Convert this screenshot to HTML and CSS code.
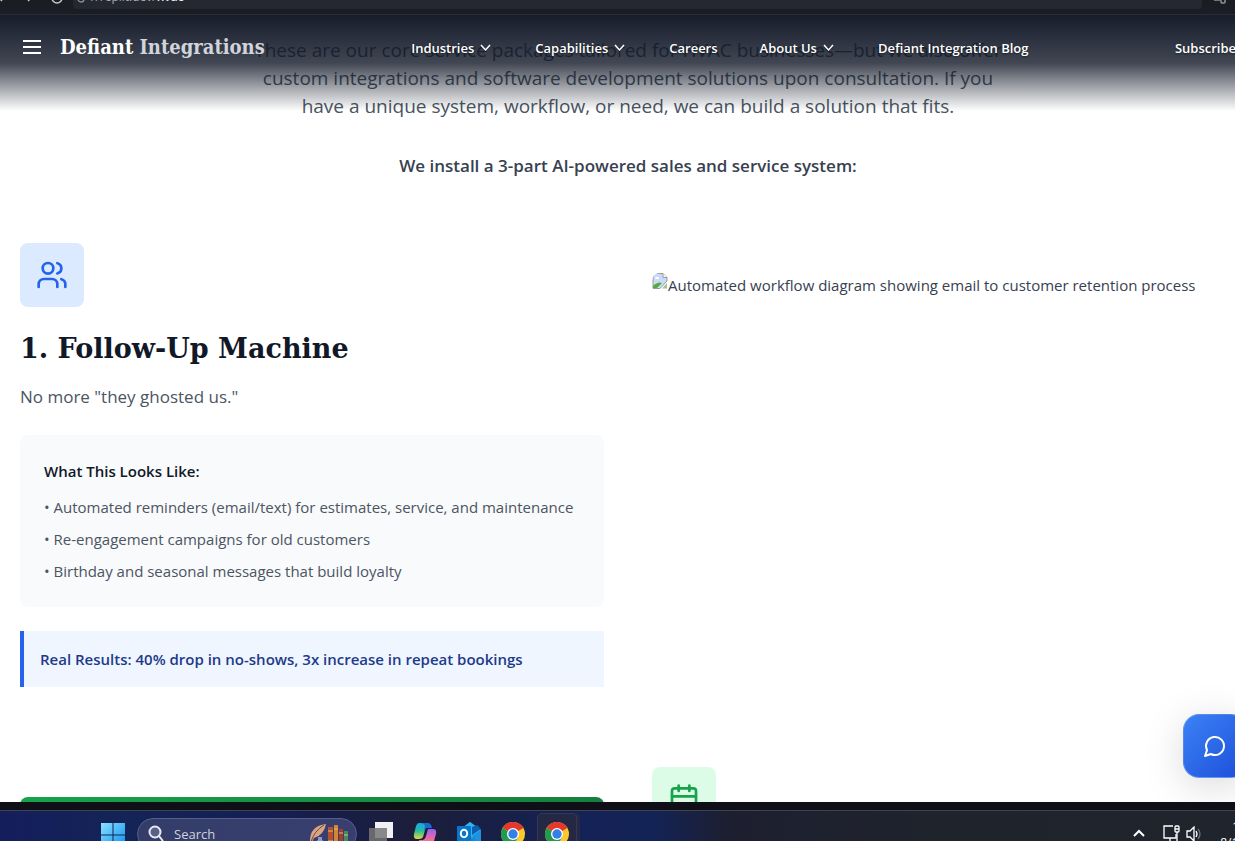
FILE: index.html
```html
<!DOCTYPE html>
<html lang="en">
<head>
<meta charset="utf-8">
<title>Defiant Integrations</title>
<link rel="stylesheet" href="styles.css">
</head>
<body>
<div class="browser-bar">
  <svg class="browser-nav" width="68" height="15" viewBox="0 0 68 15" fill="none" stroke="#c7c9cf" stroke-width="1.5"><path d="M-2 -3l4 4M32 -3l-4 4"/><circle cx="57" cy="-2" r="5"/></svg>
  <div class="address">
    <svg width="10" height="9" viewBox="0 0 10 9" fill="none" stroke="#8f929a" stroke-width="1.3"><circle cx="5" cy="-1" r="3"/></svg>
    <span class="url">//replit.dev/<b>hvac</b></span>
  </div>
  <svg class="browser-tool" width="14" height="9" viewBox="0 0 14 9" fill="none" stroke="#8f929a" stroke-width="1.5"><path d="M0 0h6"/><rect x="7" y="-3" width="4" height="6" rx="1"/></svg>
</div>

<div class="viewport">
  <div class="page">
    <header class="site-header">
      <div class="brand">
        <button class="icon-button" aria-label="Menu"><svg width="24" height="24" viewBox="0 0 24 24" stroke="#fff" stroke-width="2"><path d="M3 6h18M3 12h18M3 18h18"/></svg></button>
        <a class="logo" href="#">Defiant <span>Integrations</span></a>
      </div>
      <nav class="menu">
        <button>Industries <svg class="chev" viewBox="0 0 16 16"><path d="M4 5l4.500 5L13 5"/></svg></button>
        <button>Capabilities <svg class="chev" viewBox="0 0 16 16"><path d="M4 5l4.500 5L13 5"/></svg></button>
        <a href="#">Careers</a>
        <button>About Us <svg class="chev" viewBox="0 0 16 16"><path d="M4 5l4.500 5L13 5"/></svg></button>
        <a href="#">Defiant Integration Blog</a>
      </nav>
      <a class="subscribe" href="#">Subscribe</a>
    </header>

    <main>
      <section class="intro">
        <p class="lead">These are our core service packages tailored for HVAC businesses—but we also offer<br>custom integrations and software development solutions upon consultation. If you<br>have a unique system, workflow, or need, we can build a solution that fits.</p>
        <p class="system">We install a 3-part AI-powered sales and service system:</p>
      </section>

      <section class="services">
        <article class="service">
          <div class="tile tile-blue"><svg width="32" height="32" viewBox="0 0 24 24" fill="none" stroke="#2563eb" stroke-width="2" stroke-linecap="round" stroke-linejoin="round"><path d="M16 21v-2a4 4 0 0 0-4-4H6a4 4 0 0 0-4 4v2"/><circle cx="9" cy="7" r="4"/><path d="M22 21v-2a4 4 0 0 0-3-3.870M16 3.130a4 4 0 0 1 0 7.750"/></svg></div>
          <h2>1. Follow-Up Machine</h2>
          <p class="tagline">No more "they ghosted us."</p>
          <div class="details">
            <h3>What This Looks Like:</h3>
            <ul>
              <li>• Automated reminders (email/text) for estimates, service, and maintenance</li>
              <li>• Re-engagement campaigns for old customers</li>
              <li>• Birthday and seasonal messages that build loyalty</li>
            </ul>
          </div>
          <p class="results">Real Results: 40% drop in no-shows, 3x increase in repeat bookings</p>
        </article>
        <figure class="diagram">
          <svg width="16" height="16" viewBox="0 0 16 16"><path d="M1 3q1-2.500 3-2.500h7l4 4V8L8 15.500H1z" fill="#c9daf8" stroke="#9a9a9a"/><path d="M11 .5v4h4" fill="#fff" stroke="#9a9a9a"/><path d="M3 6q0-2 2-2 2-1 2 2z" fill="#fff"/><path d="M1 15v-2q5-5 9-3l-5 5z" fill="#55aa3c"/><path d="M15 10v5.500h-5z" fill="#9fc597"/></svg>
          <figcaption>Automated workflow diagram showing email to customer retention process</figcaption>
        </figure>
        <div class="green-card"></div>
        <article class="service">
          <div class="tile tile-green"><svg width="32" height="32" viewBox="0 0 24 24" fill="none" stroke="#16a34a" stroke-width="2" stroke-linecap="round"><path d="M8 2v4M16 2v4M3 10h18"/><rect x="3" y="4" width="18" height="18" rx="2"/></svg></div>
        </article>
      </section>
    </main>
    <button class="chat" aria-label="Open chat"><svg width="24" height="24" viewBox="0 0 24 24" fill="none" stroke="#fff" stroke-width="2" stroke-linecap="round" stroke-linejoin="round"><path d="M7.900 20A9 9 0 1 0 4 16.100L2 22Z"/></svg></button>
  </div>
</div>

<footer class="taskbar">
  <div class="dock">
    <svg class="start" width="24" height="24" viewBox="0 0 24 24"><defs><linearGradient id="win" x2="1" y2="1"><stop stop-color="#8be1ff"/><stop offset="1" stop-color="#0a90f0"/></linearGradient></defs><path fill="url(#win)" d="M0 0h11.500v11.500H0zM12.500 0H24v11.500H12.500zM0 12.500h11.500V24H0zM12.500 12.500H24V24H12.500z"/></svg>
    <label class="search">
      <svg width="16" height="18" viewBox="0 0 16 18" fill="#56608a" stroke="#e8eaf0" stroke-width="2"><circle cx="7" cy="7" r="5.500"/><path d="M11 11l4 5"/></svg>
      <input type="text" placeholder="Search" aria-label="Search">
      <svg width="42" height="24" viewBox="0 0 42 24"><path d="M2 21Q1 4 18 2q-2 11-12 14L3 22z" fill="#d8a684"/><path d="M3 20Q6 9 16 3" stroke="#714b3d" fill="none"/><path d="M10 15h4v3q4 2 3 6H7q-1-4 3-6z" fill="#8f98cc"/><path fill="#b84e2b" d="M20 5h5v19h-5z"/><path fill="#cf8737" d="M26 3h4v21h-4z"/><path fill="#a73c28" d="M31 7h4v17h-4z"/><path fill="#3f8b65" d="M36 9h4v15h-4z"/><path stroke="#e8bb67" d="M20 9h5M20 19h5M26 7h4M31 11h4M36 13h4"/></svg>
    </label>
    <div class="apps">
      <div class="app"><svg width="24" height="24" viewBox="0 0 24 24"><path fill="#f1f1f3" d="M6 0h18v16H6z"/><path fill="#777" fill-opacity=".85" d="M0 6h18v16H0z"/></svg></div>
      <div class="app"><svg width="24" height="24" viewBox="0 0 24 24"><defs><linearGradient id="cpa" x2="0" y2="1"><stop stop-color="#18a4ed"/><stop offset=".5" stop-color="#27bd9b"/><stop offset="1" stop-color="#e9d43e"/></linearGradient><linearGradient id="cpb" x2="0" y2="1"><stop stop-color="#8b66ed"/><stop offset=".5" stop-color="#e364b5"/><stop offset="1" stop-color="#ff865a"/></linearGradient></defs><path d="M6 1h8l-4 14q-1 2-4 2H4q-4 0-3-5l2-8q1-3 3-3z" fill="url(#cpa)"/><path d="M7 1h8q3 0 4 5h-5q-2 0-3 3l1-5q-1-3-5-3z" fill="#176dd2"/><path d="M15 7h5q4 0 3 5l-2 7q-1 4-5 4H9q-2 0-3-5h3q3 0 4-4z" fill="url(#cpb)"/></svg></div>
      <div class="app"><svg width="24" height="24" viewBox="0 0 24 24"><path d="M2 8L13 0l11 8v16H2z" fill="#148bd7"/><path d="M4 7l9-7 11 8-9 8z" fill="#33b2ee"/><path d="M15 5l5-2 4 4-9 6z" fill="#0b5fae"/><path d="M15 14l9-6v14z" fill="#1c92e0"/><rect y="4" width="14" height="15" rx="1" fill="#0875cc"/><ellipse cx="7" cy="11.500" rx="3.200" ry="3.700" fill="none" stroke="#fff" stroke-width="2"/></svg></div>
      <div class="app"><svg width="24" height="24" viewBox="0 0 24 24"><use href="#chrome"/></svg></div>
      <div class="app app-active"><svg width="24" height="24" viewBox="0 0 24 24"><g id="chrome"><circle cx="12" cy="12" r="12" fill="#fbc928"/><path d="M12 12L1.600 6A12 12 0 0 1 22.400 6z" fill="#e3382b"/><path d="M1.600 6A12 12 0 0 0 12 24l5.200-9z" fill="#229b50"/><circle cx="12" cy="12" r="6" fill="#fff"/><circle cx="12" cy="12" r="4.700" fill="#347fe8"/></g></svg></div>
    </div>
  </div>
  <div class="tray">
    <svg width="12" height="24" viewBox="0 0 12 24" fill="none" stroke="#fff" stroke-width="2"><path d="M1 14l5-5 5 5"/></svg>
    <svg class="network" width="18" height="20" viewBox="0 0 18 20" fill="none" stroke="#fff" stroke-width="1.300"><path d="M10 1H1v12h12V9M7 13v4M3 17h9"/><rect x="12" y="1" width="4" height="6" rx="1"/><path d="M12 4h4M14 7v10"/></svg>
    <svg class="sound" width="16" height="16" viewBox="0 0 16 16" fill="none" stroke="#fff" stroke-width="1.300"><path d="M1 5h3l4-4v14l-4-4H1z"/><path d="M10 5q2 3 0 6"/><path d="M12 3q4 5 0 10" stroke="#687080"/></svg>
    <div class="clock">1:15 PM<br>8/11/2025</div>
  </div>
</footer>
</body>
</html>
```
FILE: styles.css
```css
* { box-sizing: border-box; }
html, body { height: 100%; }
body {
  margin: 0;
  display: flex;
  flex-direction: column;
  overflow: hidden;
  background: #fff;
  color: #374151;
  font-family: "Segoe UI", "Open Sans", "Noto Sans", sans-serif;
  font-size: 15px;
  line-height: 24px;
}
h2, h3, p, ul, figure { margin: 0; padding: 0; }
button { border: 0; background: none; padding: 0; font: inherit; color: inherit; }
a { color: inherit; text-decoration: none; }
svg { display: block; flex: none; }

.browser-bar {
  flex: none;
  display: flex;
  height: 15px;
  background: #1b1d25;
  border-bottom: 1px solid #2b2c38;
  overflow: hidden;
}
.browser-nav { margin-right: 5px; }
.address {
  flex: 1;
  display: flex;
  height: 9px;
  padding-left: 3px;
  background: #252831;
  border-radius: 0 0 4px 4px;
  overflow: hidden;
}
.url { margin: -13px 0 0 5px; font-size: 12px; line-height: 20px; color: #a9abb1; }
.url b { color: #e4e5e8; font-weight: 600; }
.browser-tool { margin: 0 7px 0 12px; }

.viewport { flex: 1; min-height: 0; overflow: hidden; }
.page { position: relative; width: calc(100% + 21px); height: 100%; }

.site-header {
  position: absolute;
  inset: 0 0 auto 0;
  z-index: 2;
  display: flex;
  justify-content: space-between;
  height: 96px;
  padding: 20px 20px 0;
  background: linear-gradient(to bottom, rgba(17, 24, 39, .98), rgba(17, 24, 39, .8) 50%, rgba(17, 24, 39, 0));
  color: #fff;
  font-size: 13px;
  font-weight: 600;
}
.brand { display: flex; align-items: center; gap: 16px; height: 24px; }
.logo {
  font-family: "DejaVu Serif Condensed", "Liberation Serif", serif;
  font-size: 20px;
  font-weight: 700;
}
.logo span { color: #d1d5db; }
.menu { display: flex; gap: 42px; height: 26px; }
.menu button { display: flex; align-items: center; gap: 3px; }
.menu a, .menu button, .subscribe { line-height: 26px; height: 26px; text-shadow: 0 1px 2px rgba(0, 0, 0, .5); }
.chev { width: 16px; height: 16px; fill: none; stroke: #fff; stroke-width: 1.5; }

main { padding: 21px 20px 0; }
.intro { text-align: center; }
.lead { font-size: 19px; line-height: 28px; color: #4b5563; white-space: nowrap; }
.system { margin-top: 32px; font-size: 17px; line-height: 28px; font-weight: 600; }

.services {
  display: grid;
  grid-template-columns: 1fr 1fr;
  gap: 80px 48px;
  padding-top: 63px;
}
.tile {
  display: flex;
  align-items: center;
  justify-content: center;
  width: 64px;
  height: 64px;
  border-radius: 8px;
}
.tile-blue { background: #dbeafe; }
.tile-green { background: #dcfce7; }
h2 {
  margin-top: 24px;
  color: #111827;
  font-family: "DejaVu Serif", "Liberation Serif", serif;
  font-size: 27px;
  line-height: 36px;
  font-weight: 700;
}
.tagline { margin-top: 16px; font-size: 17px; line-height: 28px; color: #4b5563; }
.details { margin-top: 24px; padding: 24px; border-radius: 8px; background: #f9fafb; color: #4b5563; white-space: nowrap; }
.details h3 { margin-bottom: 12px; color: #111827; font-size: 15px; line-height: 24px; font-weight: 600; }
.details ul { display: grid; gap: 8px; list-style: none; }
.results { margin-top: 24px; padding: 16px; border-left: 4px solid #2563eb; background: #eff6ff; color: #1e3a8a; font-weight: 600; }
.diagram { display: flex; height: 24px; margin-top: 30px; white-space: nowrap; }
.diagram svg { border-radius: 8px 0 0 0; }
.green-card { height: 64px; margin-top: 30px; border-radius: 8px; background: linear-gradient(to right, #16a34a, #15803d); }

.chat {
  position: absolute;
  right: 9px;
  bottom: 24px;
  display: flex;
  align-items: center;
  justify-content: center;
  width: 64px;
  height: 64px;
  border: 1px solid rgba(255, 255, 255, .25);
  border-radius: 16px;
  background: linear-gradient(135deg, #3b82f6, #1d4ed8);
  box-shadow: 0 8px 40px rgba(0, 0, 0, .15);
}

.taskbar {
  flex: none;
  position: relative;
  z-index: 3;
  display: flex;
  justify-content: space-between;
  height: 39px;
  border-top: 8px solid #0f1017;
  background: linear-gradient(to right, #141e5c 0%, #142456 10%, #151e55 22%, #1c1e39 34%, #142257 47%, #142355 53%, #1d1f30 59%, #1f232c 75%, #20242c 100%);
  box-shadow: inset 0 1px #40434f;
  overflow: hidden;
}
.dock { display: flex; padding-left: 101px; }
.start { margin-top: 13px; }
.search {
  display: flex;
  width: 220px;
  height: 32px;
  margin: 8px 0 0 12px;
  padding: 6px 6px 0 10px;
  border: 1px solid #565f87;
  border-radius: 16px;
  background: linear-gradient(to right, #343d69, #383f70);
}
.search input {
  flex: 1;
  min-width: 0;
  height: 18px;
  padding: 0 0 0 10px;
  border: 0;
  background: none;
  font: inherit;
  font-size: 13px;
}
.search input::placeholder { color: #d0d2dc; opacity: 1; }
.search svg:last-child { margin-top: -3px; }
.apps { display: flex; gap: 4px; margin: 3px 0 0 4px; }
.app { width: 40px; height: 40px; padding: 9px 8px; }
.app-active { padding: 8px 7px; border: 1px solid #343854; border-radius: 5px; background: #242844; box-shadow: 3px 0 #252947; }
.tray { display: flex; margin-right: -42px; padding-top: 12px; color: #fff; }
.network { margin: 3px 0 0 18px; }
.sound { margin: 4px 0 0 5px; }
.clock { width: 72px; height: 32px; margin-left: 3px; text-align: right; font-size: 12px; line-height: 16px; margin-top: -3px; white-space: nowrap; }
```
